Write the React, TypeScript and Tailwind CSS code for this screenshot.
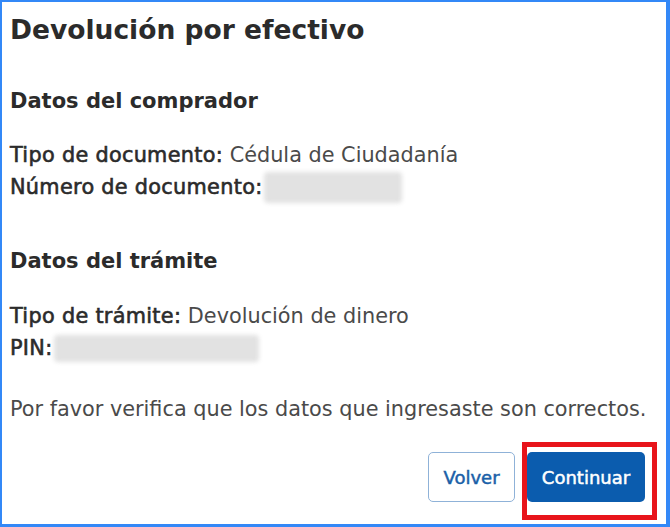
import React from "react";

export default function App() {
  const font = { fontFamily: '"DejaVu Sans", "Liberation Sans", sans-serif' };
  return (
    <div
      className="w-[670px] h-[527px] bg-white border-l-2 border-t-2 border-r-4 border-b-[3px] border-[#3388f7] box-border text-[#2b2b2b] overflow-hidden"
      style={font}
    >
      <div className="flex flex-col pl-[8px] pr-[9px]">
        <h1 className="text-[26.5px] font-bold leading-[36px] mt-[10px]">
          Devolución por efectivo
        </h1>
        <h2 className="text-[21px] font-bold leading-[28px] mt-[39px]">
          Datos del comprador
        </h2>
        <div className="mt-[24px] text-[20.8px] leading-[32px]">
          <div>
            <span className="tracking-[0.3px] [-webkit-text-stroke:0.6px_#2b2b2b]">Tipo de documento:</span>{" "}
            <span className="text-[#4a4a4a]">Cédula de Ciudadanía</span>
          </div>
          <div className="flex items-center">
            <span className="tracking-[0.3px] [-webkit-text-stroke:0.6px_#2b2b2b]">Número de documento:</span>
            <span className="ml-[1px] w-[138px] h-[31px] rounded-[4px] bg-[#e2e2e2] blur-[2px]" />
          </div>
        </div>
        <h2 className="text-[21px] font-bold leading-[28px] mt-[44px]">
          Datos del trámite
        </h2>
        <div className="mt-[25px] text-[20.8px] leading-[32px]">
          <div>
            <span className="tracking-[0.3px] [-webkit-text-stroke:0.6px_#2b2b2b]">Tipo de trámite:</span>{" "}
            <span className="text-[#4a4a4a]">Devolución de dinero</span>
          </div>
          <div className="flex items-center">
            <span className="tracking-[0.3px] [-webkit-text-stroke:0.6px_#2b2b2b]">PIN:</span>
            <span className="ml-[2px] w-[205px] h-[27px] rounded-[4px] bg-[#e2e2e2] blur-[2px]" />
          </div>
        </div>
        <p className="mt-[29px] text-[20.8px] leading-[32px] text-[#4a4a4a]">
          Por favor verifica que los datos que ingresaste son correctos.
        </p>
        <div className="flex justify-end items-start mt-[17px]">
          <button className="mt-[10px] h-[50px] w-[87px] rounded-[5px] border border-[#8fb2d8] bg-white text-[#1a5fa8] text-[18px] [-webkit-text-stroke:0.5px_#1a5fa8]">
            Volver
          </button>
          <div className="ml-[7px] border-[5px] border-[#e8141b] pt-[5px] pb-[13px] pr-[7px]">
            <button className="h-[50px] w-[118px] rounded-[5px] bg-[#0b5cae] text-white text-[18px] [-webkit-text-stroke:0.5px_#ffffff]">
              Continuar
            </button>
          </div>
        </div>
      </div>
    </div>
  );
}
